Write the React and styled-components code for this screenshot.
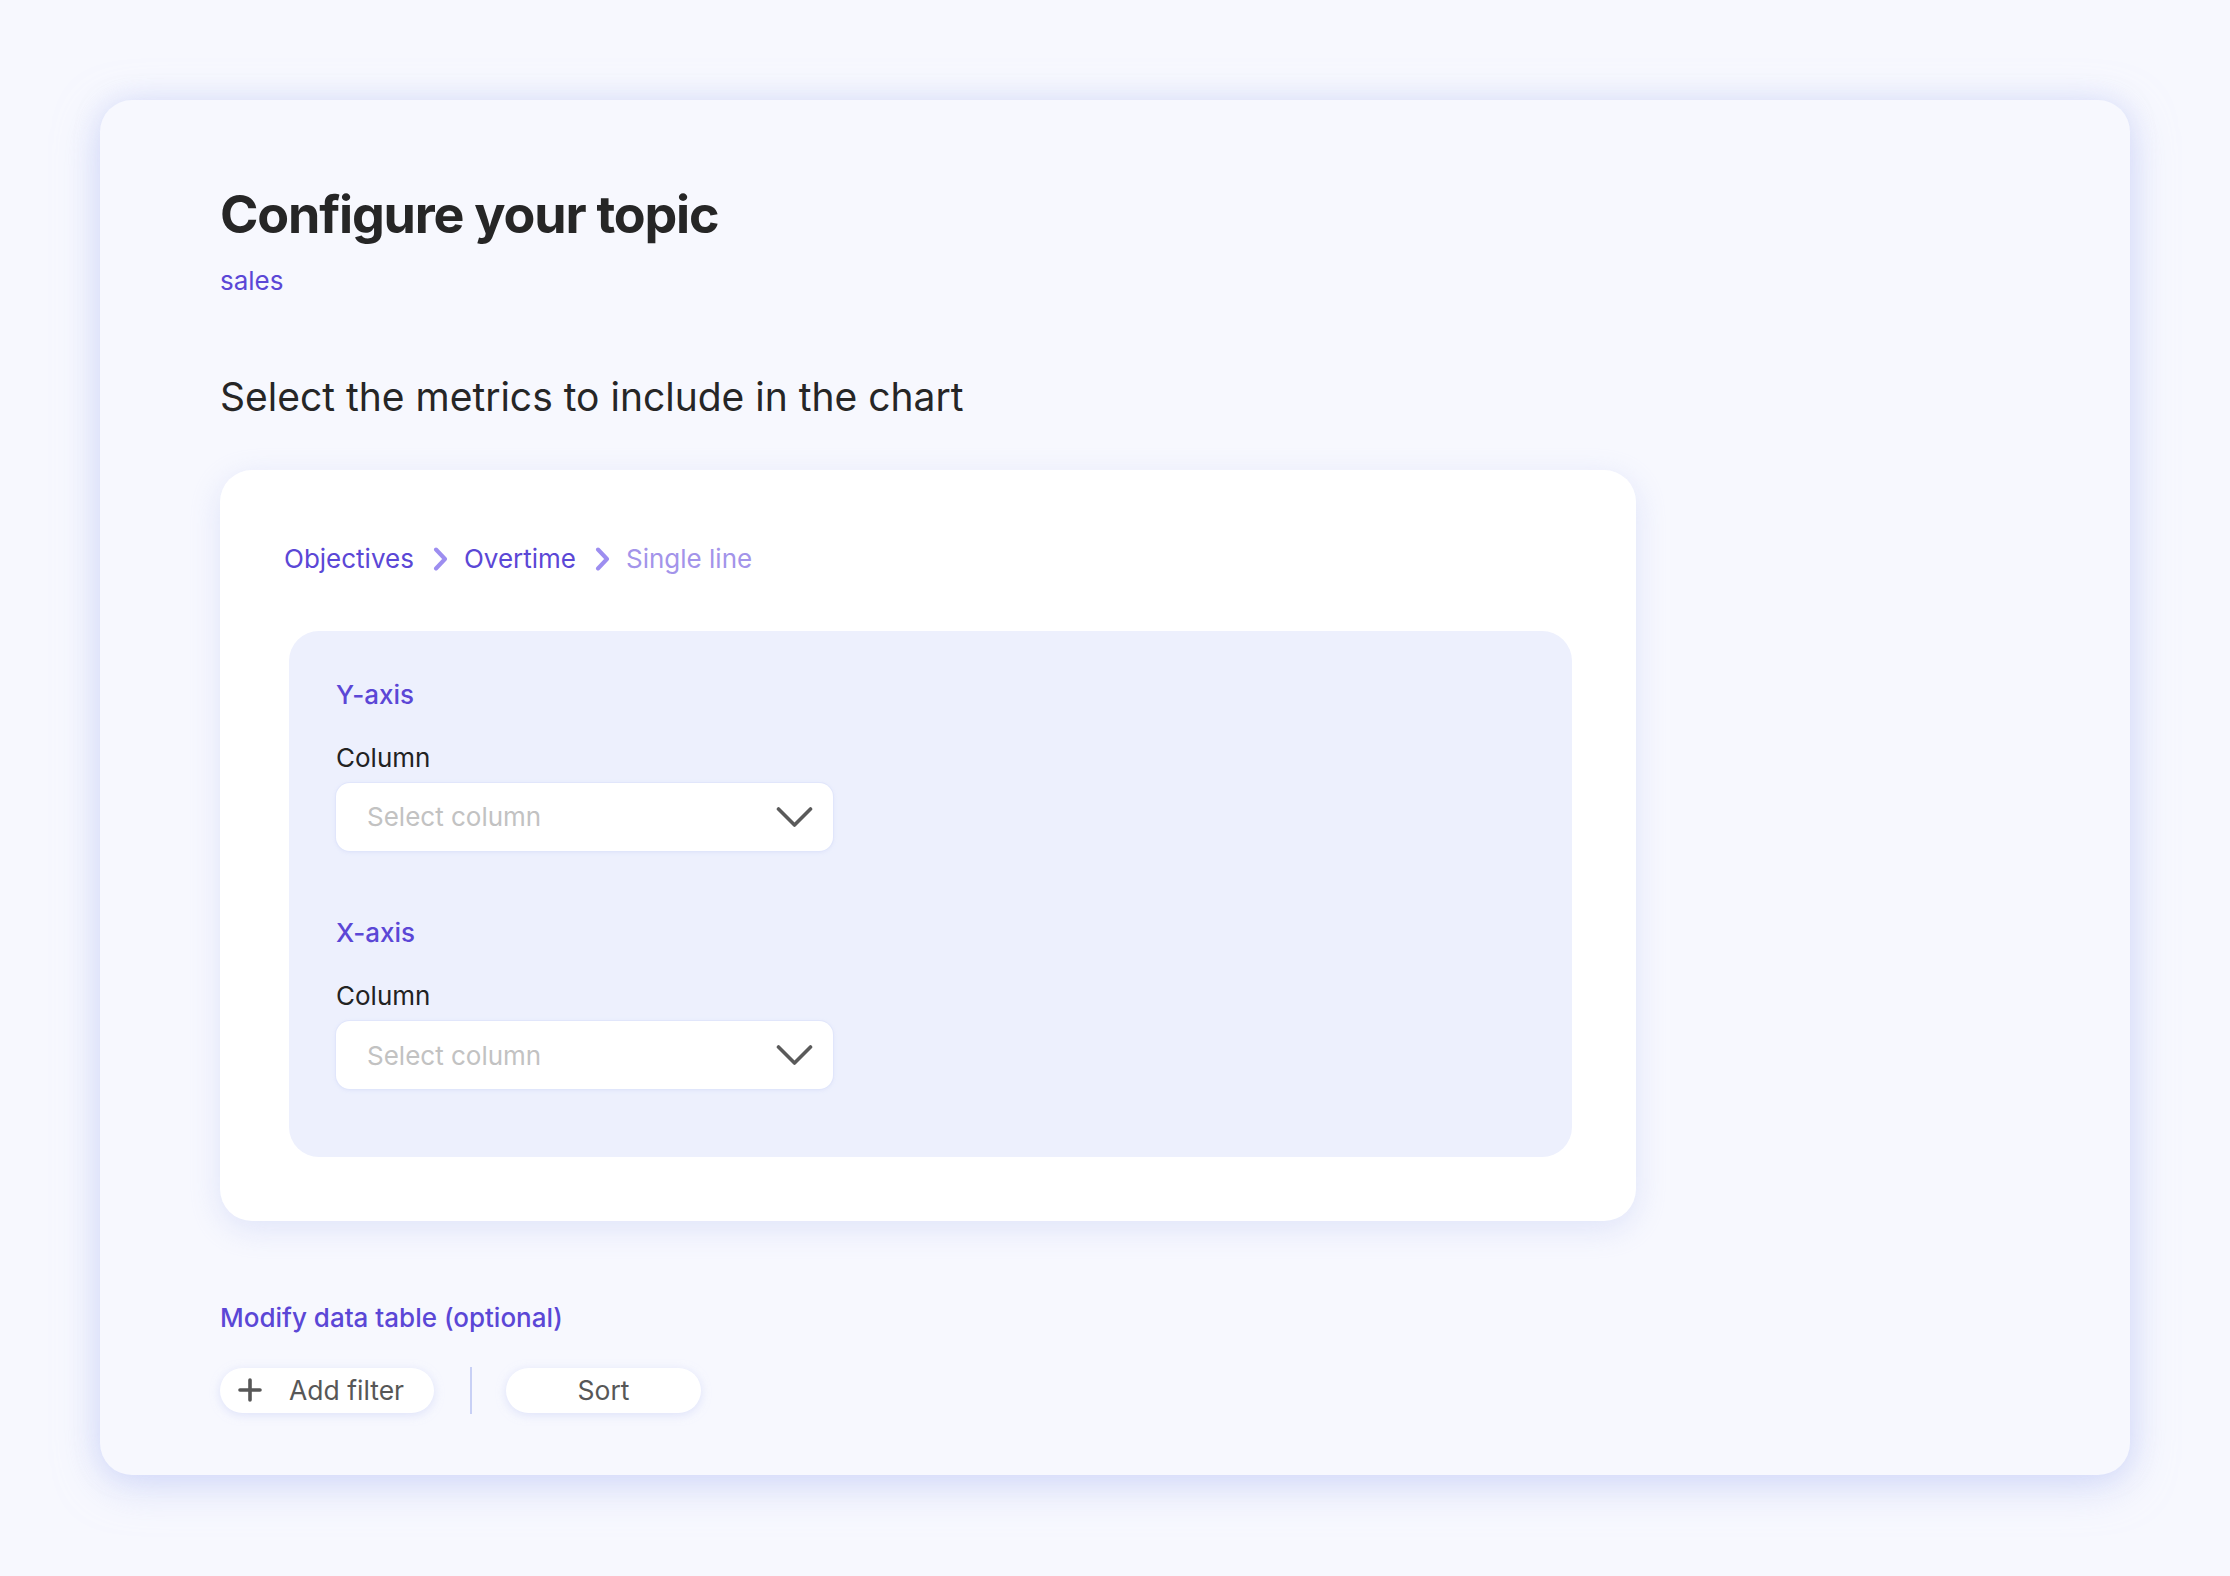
import React from "react";
import styled, { createGlobalStyle } from "styled-components";

const GlobalStyle = createGlobalStyle`
  html, body {
    margin: 0;
    padding: 0;
    background: #f7f8fe;
  }
  body {
    font-family: Inter, "Noto Sans", "Liberation Sans", sans-serif;
    -webkit-font-smoothing: antialiased;
  }
  * { box-sizing: border-box; }
`;

const Page = styled.div`
  min-height: 1576px;
  padding: 100px 100px 100px 100px;
  background: #f7f8fe;
`;

const Shell = styled.section`
  width: 2030px;
  height: 1375px;
  background: #f7f8fe;
  border-radius: 32px;
  box-shadow: 0 10px 44px rgba(190, 200, 246, 0.6), 0 0 22px rgba(214, 220, 250, 0.5);
  padding: 84px 120px 64px 120px;
  display: flex;
  flex-direction: column;
`;

const Title = styled.h1`
  margin: 0;
  font-size: 52px;
  line-height: 1.2;
  font-weight: 700;
  letter-spacing: -1.2px;
  color: #262626;
`;

const Topic = styled.div`
  margin-top: 19px;
  font-size: 26px;
  line-height: 1.2;
  color: #5b47d6;
`;

const SectionHeading = styled.h2`
  margin: 77px 0 0 0;
  font-size: 39px;
  line-height: 1.2;
  font-weight: 400;
  color: #262626;
`;

const Card = styled.div`
  margin-top: 50px;
  width: 1416px;
  background: #ffffff;
  border-radius: 32px;
  box-shadow: 0 8px 30px rgba(196, 204, 245, 0.45);
  padding: 73px 64px 64px 64px;
`;

const Breadcrumbs = styled.nav`
  display: flex;
  align-items: center;
  font-size: 26px;
  line-height: 1.2;
`;

const Crumb = styled.span`
  color: ${(p) => (p.$current ? "#a394ea" : "#5b47d6")};
`;

const CrumbSep = styled.span`
  display: inline-flex;
  align-items: center;
  margin: 0 15px 0 19px;
`;

const Panel = styled.div`
  margin: 56px 0 0 5px;
  background: #edf0fd;
  border-radius: 30px;
  padding: 48px 34px 68px 47px;
  display: flex;
  flex-direction: column;
`;

const AxisGroup = styled.div`
  display: flex;
  flex-direction: column;
  & + & {
    margin-top: 66px;
  }
`;

const AxisTitle = styled.div`
  font-size: 26px;
  line-height: 1.2;
  font-weight: 500;
  color: #5b47d6;
`;

const FieldLabel = styled.label`
  margin-top: 32px;
  font-size: 26px;
  line-height: 1.2;
  color: #222222;
`;

const SelectBox = styled.div`
  margin-top: 10px;
  width: 497px;
  height: 68px;
  background: #ffffff;
  border-radius: 14px;
  box-shadow: 0 0 0 1px rgba(224, 229, 251, 0.9), 0 1px 4px rgba(206, 213, 248, 0.6);
  display: flex;
  align-items: center;
  justify-content: space-between;
  padding: 0 20px 0 31px;
`;

const Placeholder = styled.span`
  font-size: 26px;
  color: #c2c2c2;
`;

const ModifyTitle = styled.div`
  margin-top: 81px;
  font-size: 26px;
  line-height: 1.2;
  font-weight: 500;
  color: #5b47d6;
`;

const ActionRow = styled.div`
  margin-top: 33px;
  display: flex;
  align-items: center;
`;

const Pill = styled.button`
  height: 45px;
  width: ${(p) => p.$width}px;
  border: none;
  border-radius: 23px;
  background: #ffffff;
  box-shadow: 0 2px 10px rgba(200, 208, 246, 0.55);
  display: flex;
  align-items: center;
  justify-content: ${(p) => (p.$center ? "center" : "flex-start")};
  padding: ${(p) => (p.$center ? "0" : "0 0 0 18px")};
  gap: 27px;
  font-family: inherit;
  font-size: 26.5px;
  color: #575757;
  cursor: pointer;
`;

const Divider = styled.div`
  width: 2px;
  height: 47px;
  margin: 0 34px 0 36px;
  background: #c8d0f5;
`;

const ChevronRight = () => (
  <svg width="16" height="24" viewBox="0 0 16 24" fill="none">
    <path d="M3 2.5 L12 12 L3 21.5" stroke="#9d8ef0" strokeWidth="4" strokeLinecap="round" strokeLinejoin="round" />
  </svg>
);

const ChevronDown = () => (
  <svg width="37" height="22" viewBox="0 0 37 22" fill="none">
    <path d="M2.5 3 L18.5 19 L34.5 3" stroke="#5a5a5a" strokeWidth="3.6" strokeLinecap="round" strokeLinejoin="round" />
  </svg>
);

const PlusIcon = () => (
  <svg width="24" height="24" viewBox="0 0 24 24" fill="none">
    <path d="M12 2 V22 M2 12 H22" stroke="#575757" strokeWidth="3.6" strokeLinecap="round" />
  </svg>
);

const Axis = ({ title }) => (
  <AxisGroup>
    <AxisTitle>{title}</AxisTitle>
    <FieldLabel>Column</FieldLabel>
    <SelectBox>
      <Placeholder>Select column</Placeholder>
      <ChevronDown />
    </SelectBox>
  </AxisGroup>
);

export default function App() {
  return (
    <>
      <GlobalStyle />
      <Page>
        <Shell>
          <Title>Configure your topic</Title>
          <Topic>sales</Topic>
          <SectionHeading>Select the metrics to include in the chart</SectionHeading>
          <Card>
            <Breadcrumbs>
              <Crumb>Objectives</Crumb>
              <CrumbSep><ChevronRight /></CrumbSep>
              <Crumb>Overtime</Crumb>
              <CrumbSep><ChevronRight /></CrumbSep>
              <Crumb $current>Single line</Crumb>
            </Breadcrumbs>
            <Panel>
              <Axis title="Y-axis" />
              <Axis title="X-axis" />
            </Panel>
          </Card>
          <ModifyTitle>Modify data table (optional)</ModifyTitle>
          <ActionRow>
            <Pill $width={214}>
              <PlusIcon />
              <span>Add filter</span>
            </Pill>
            <Divider />
            <Pill $width={195} $center>Sort</Pill>
          </ActionRow>
        </Shell>
      </Page>
    </>
  );
}
